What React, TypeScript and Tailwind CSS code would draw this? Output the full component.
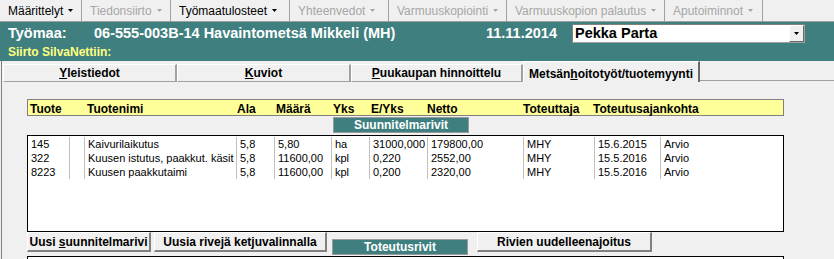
import type { ReactNode } from "react";

const menu = [
  { label: "Määrittelyt", w: "w-[82px]", on: true },
  { label: "Tiedonsiirto", w: "w-[89px]", on: false },
  { label: "Työmaatulosteet", w: "w-[119px]", on: true },
  { label: "Yhteenvedot", w: "w-[99px]", on: false },
  { label: "Varmuuskopiointi", w: "w-[118px]", on: false },
  { label: "Varmuuskopion palautus", w: "w-[158px]", on: false },
  { label: "Aputoiminnot", w: "w-[98px]", on: false },
];

const headCols = [
  "Tuote",
  "Tuotenimi",
  "Ala",
  "Määrä",
  "Yks",
  "E/Yks",
  "Netto",
  "Toteuttaja",
  "Toteutusajankohta",
];

const rows = [
  ["145", "", "Kaivurilaikutus", "5,8", "5,80", "ha", "31000,000", "179800,00", "MHY", "15.6.2015", "Arvio"],
  ["322", "", "Kuusen istutus, paakkut. käsit", "5,8", "11600,00", "kpl", "0,220", "2552,00", "MHY", "15.5.2016", "Arvio"],
  ["8223", "", "Kuusen paakkutaimi", "5,8", "11600,00", "kpl", "0,200", "2320,00", "MHY", "15.5.2016", "Arvio"],
];

function Caret({ className = "fill-black" }: { className?: string }) {
  return (
    <svg width="5" height="3" viewBox="0 0 5 3" className={className}>
      <polygon points="0,0 5,0 2.5,3" />
    </svg>
  );
}

function Tab({ children, w, active }: { children: ReactNode; w: string; active?: boolean }) {
  if (active) {
    return (
      <div
        className={`${w} h-[21px] flex items-start justify-center pt-[3px] border-t border-l border-white border-r-2 border-r-[#696969] bg-[#f0f0f0] text-[12px] font-bold`}
      >
        {children}
      </div>
    );
  }
  return (
    <div
      className={`${w} h-[18px] flex items-center justify-center border-t border-l border-white border-r-2 border-r-[#a0a0a0] border-b border-b-[#a0a0a0] bg-[#f0f0f0] text-[12px] font-bold`}
    >
      {children}
    </div>
  );
}

function Btn({ children, w }: { children: ReactNode; w: string }) {
  return (
    <div
      className={`${w} h-[20px] flex items-center justify-center bg-[#f0f0f0] border-t border-l border-white border-r-2 border-b-2 border-r-[#808080] border-b-[#808080] text-[12px] font-bold`}
    >
      {children}
    </div>
  );
}

function TealLabel({ children, className = "" }: { children: ReactNode; className?: string }) {
  return (
    <div
      className={`w-[136px] h-[16px] flex items-center justify-center bg-[#407f7f] border border-[#9a9a9a] text-white text-[12px] font-bold ${className}`}
    >
      {children}
    </div>
  );
}

export default function App() {
  return (
    <div className="w-[834px] h-[259px] overflow-hidden bg-[#f0f0f0] font-['Liberation_Sans',Arial,sans-serif] text-black">
      {/* menu bar */}
      <div className="flex h-[22px] border-b border-[#a0a0a0]">
        {menu.map((m) => (
          <div
            key={m.label}
            className={`${m.w} flex items-center gap-[5px] pl-[8px] border-r border-[#a0a0a0] text-[12px] ${
              m.on ? "text-black" : "text-[#a6a6a6]"
            }`}
          >
            {m.label}
            <Caret className={m.on ? "fill-black" : "fill-[#a6a6a6]"} />
          </div>
        ))}
      </div>

      {/* title band */}
      <div className="h-[39px] bg-[#407f7f] pl-[8px] pt-[2px]">
        <div className="flex items-center h-[19px] text-white text-[14.5px] font-bold">
          <span className="w-[86px]">Työmaa:</span>
          <span className="w-[392px]">06-555-003B-14 Havaintometsä Mikkeli (MH)</span>
          <span className="w-[86px]">11.11.2014</span>
          <div className="w-[233px] h-[19px] bg-white border border-[#808080] border-r-[#a0a0a0] border-b-[#a0a0a0] flex items-center justify-between">
            <span className="pl-[2px] text-black">Pekka Parta</span>
            <div className="w-[15px] h-[17px] bg-[#f0f0f0] border-t border-l border-white border-r border-b border-r-[#696969] border-b-[#696969] flex items-center justify-center">
              <Caret />
            </div>
          </div>
        </div>
        <div className="h-[14px] mt-[2px] flex items-center text-[12px] font-bold text-[#ffff80]">
          Siirto SilvaNettiin:
        </div>
      </div>

      {/* tab page */}
      <div className="ml-px border-l border-[#808080] h-[198px]">
        <div className="flex items-end h-[21px] pl-px">
          <Tab w="w-[174px]">
            <span>
              <u>Y</u>leistiedot
            </span>
          </Tab>
          <Tab w="w-[174px]">
            <span>
              <u>K</u>uviot
            </span>
          </Tab>
          <Tab w="w-[172px]">
            <span>
              <u>P</u>uukaupan hinnoittelu
            </span>
          </Tab>
          <Tab w="w-[177px]" active>
            <span>
              Metsän<u>h</u>oitotyöt/tuotemyynti
            </span>
          </Tab>
          <div className="flex-1 h-px bg-[#a0a0a0] mb-px" />
        </div>

        <div className="pl-[25px] pt-[17px]">
          {/* column header */}
          <div className="w-[757px] h-[17px] bg-[#ffff99] border border-[#808080] pl-[2px] grid grid-cols-[57px_150px_39px_57px_38px_56px_96px_70px_1fr] items-center text-[12px] font-bold">
            {headCols.map((h) => (
              <span key={h}>{h}</span>
            ))}
          </div>

          <TealLabel className="ml-[306px] mt-px">Suunnitelmarivit</TealLabel>

          {/* planned rows */}
          <div className="mt-[2px] w-[757px] h-[97px] bg-white border border-black pt-px">
            {rows.map((r) => (
              <div
                key={r[0]}
                className="grid grid-cols-[41px_15px_152px_38px_57px_38px_58px_96px_71px_66px_1fr] h-[14px] text-[11px] leading-[14px]"
              >
                {r.map((c, i) => (
                  <span
                    key={i}
                    className={`whitespace-nowrap overflow-hidden ${
                      i === 0 ? "pl-[3px]" : "pl-[3px] border-l border-[#c0c0c0]"
                    }`}
                  >
                    {c}
                  </span>
                ))}
              </div>
            ))}
          </div>

          {/* buttons */}
          <div className="flex items-start h-[24px]">
            <Btn w="w-[124px]">
              <span>
                Uusi <u>s</u>uunnitelmarivi
              </span>
            </Btn>
            <div className="w-[3px]" />
            <Btn w="w-[173px]">Uusia rivejä ketjuvalinnalla</Btn>
            <TealLabel className="ml-[5px] mt-[7px]">Toteutusrivit</TealLabel>
            <div className="w-[9px]" />
            <Btn w="w-[175px]">Rivien uudelleenajoitus</Btn>
          </div>

          <div className="w-[757px] h-[20px] bg-white border-t border-l border-r border-black" />
        </div>
      </div>
    </div>
  );
}
